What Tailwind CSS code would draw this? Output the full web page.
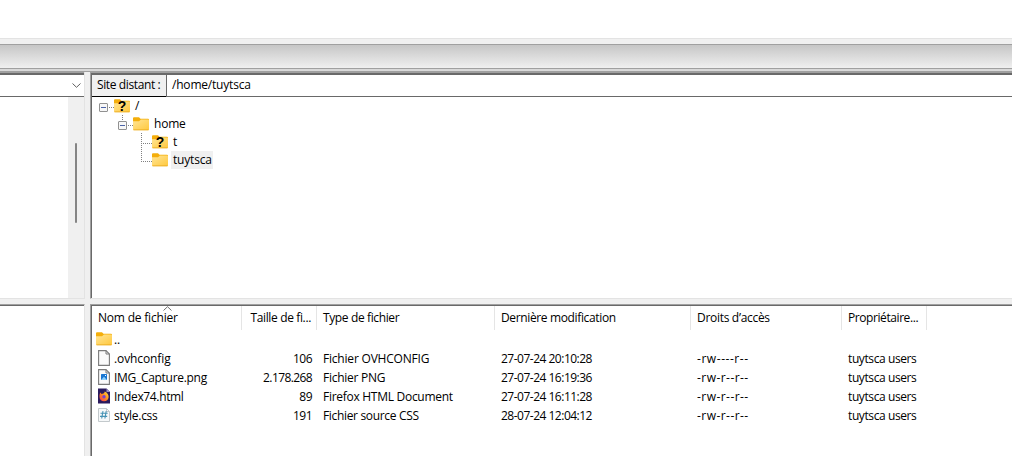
<!DOCTYPE html>
<html lang="fr">
<head>
  <meta charset="UTF-8" />
  <meta name="viewport" content="width=device-width, initial-scale=1.0" />
  <title>Site distant</title>
  <script src="https://cdn.jsdelivr.net/npm/@tailwindcss/browser@4"></script>
</head>
<body class="w-[1012px] h-[456px] overflow-hidden flex flex-col bg-[#f0f0f0] text-black text-[12px] leading-[18px] font-['Open_Sans','Noto_Sans',sans-serif] tracking-[-0.2px] whitespace-nowrap">

  <!-- Shared icons -->
  <svg class="absolute w-0 h-0">
    <defs>
      <linearGradient id="gold" x1="0" y1="0" x2="1" y2="1">
        <stop offset="0" stop-color="#ffe596" />
        <stop offset="1" stop-color="#ffc83d" />
      </linearGradient>
      <linearGradient id="flame" x1="1" y1="0" x2="0" y2="1">
        <stop offset="0" stop-color="#ffe03a" />
        <stop offset="0.5" stop-color="#ff8a1f" />
        <stop offset="1" stop-color="#f0325a" />
      </linearGradient>
      <symbol id="folder" viewBox="0 0 16 14">
        <path d="M0 1.2Q0 .2 1 .2H6L7.5 1.8H15Q16 1.8 16 2.8V8H0Z" fill="#f4ae0b" />
        <path d="M0 4.2H6L8 2.6H15.2Q16 2.6 16 3.4V12.4Q16 13.2 15.2 13.2H.8Q0 13.2 0 12.4Z" fill="url(#gold)" />
        <path d="M.5 12.8H15.5" stroke="#e9ab22" stroke-width=".8" />
      </symbol>
      <symbol id="expander" viewBox="0 0 9 9">
        <rect x=".5" y=".5" width="8" height="8" rx=".5" fill="#f7f7f7" stroke="#919191" />
        <path d="M2 4.5H7" stroke="#4b63a7" />
      </symbol>
      <symbol id="page" viewBox="0 0 12 16">
        <path d="M.6 .6H8L11.4 4V15.4H.6Z" fill="#fafafa" stroke="#7b7b7b" stroke-width="1.1" />
        <path d="M8 .6V4H11.4" fill="none" stroke="#7b7b7b" />
      </symbol>
    </defs>
  </svg>

  <!-- Log and queue bar -->
  <div class="h-[38px] shrink-0 bg-white"></div>
  <div class="h-px shrink-0 bg-[#e3e3e3]"></div>
  <div class="h-[5px] shrink-0"></div>
  <div class="h-[25px] shrink-0 border-y border-[#a0a0a0] bg-linear-to-b from-[#c6c6c6] to-[#f0f0f0]"></div>
  <div class="h-[3px] shrink-0 bg-[#d9d9d9] border-b border-[#a0a0a0]"></div>

  <div class="flex flex-1 min-h-0">
    <!-- Local side -->
    <div class="w-[85px] shrink-0 flex flex-col">
      <div class="h-[227px] flex flex-col border-r border-b border-[#e3e3e3]">
        <div class="h-px bg-[#a0a0a0]"></div>
        <div class="h-[2px] bg-[#696969]"></div>
        <div class="h-[22px] flex justify-end items-center pr-[3px] bg-white border-b border-[#696969]">
          <svg class="w-[9px] h-[5px]" viewBox="0 0 9 5"><path d="M.5 .5L4.5 4.3L8.5 .5" fill="none" stroke="#606060" /></svg>
        </div>
        <div class="flex-1 flex bg-white">
          <div class="ml-auto w-4 flex justify-center pt-[46px] bg-[#f0f0f0]">
            <div class="w-[2px] h-[80px] rounded-full bg-[#858585]"></div>
          </div>
        </div>
      </div>
      <div class="h-[5px]"></div>
      <div class="flex-1 bg-white border-t border-r border-t-[#a0a0a0] border-r-[#e3e3e3]">
        <div class="h-px bg-[#696969]"></div>
      </div>
    </div>

    <div class="w-[5px] shrink-0"></div>

    <!-- Remote side -->
    <div class="flex-1 min-w-0 flex flex-col">
      <div class="h-[227px] flex flex-col border-b border-b-[#e3e3e3] border-l border-l-[#a0a0a0]">
        <div class="h-px bg-[#a0a0a0]"></div>
        <div class="flex-1 flex flex-col border-l border-t-2 border-[#696969] bg-white">
          <div class="h-[22px] shrink-0 flex">
            <div class="w-[74px] pl-[5px] pt-[1px] bg-[#f0f0f0] border-b border-black tracking-[-0.38px]">Site distant :</div>
            <div class="flex-1 pl-[5px] pt-[1px] border-l border-b border-[#696969]">/home/tuytsca</div>
          </div>

          <div class="flex flex-col">
            <div class="h-[18px] flex">
              <svg class="w-[22px] h-[18px]" viewBox="0 0 22 18">
                <use href="#expander" x="7" y="6" width="9" height="9" />
                <path d="M17 10.5H22" stroke="#808080" stroke-dasharray="1 1" />
              </svg>
              <div class="relative w-4 mt-[2px]">
                <svg class="w-4 h-[14px]"><use href="#folder" /></svg>
                <span class="absolute inset-x-0 -top-[2px] text-center font-['Liberation_Sans',sans-serif] text-[14px] font-bold tracking-normal">?</span>
              </div>
              <span class="pl-[5px]">/</span>
            </div>
            <div class="h-[18px] flex">
              <svg class="w-[41px] h-[18px]" viewBox="0 0 41 18">
                <path d="M30.5 0V6" stroke="#808080" stroke-dasharray="1 1" />
                <use href="#expander" x="26" y="6" width="9" height="9" />
                <path d="M36 10.5H41" stroke="#808080" stroke-dasharray="1 1" />
              </svg>
              <svg class="w-4 h-[14px] mt-[2px]"><use href="#folder" /></svg>
              <span class="pl-[5px]">home</span>
            </div>
            <div class="h-[18px] flex">
              <svg class="w-[60px] h-[18px]" viewBox="0 0 60 18">
                <path d="M49.5 0V18M49 10.5H60" stroke="#808080" stroke-dasharray="1 1" />
              </svg>
              <div class="relative w-4 mt-[2px]">
                <svg class="w-4 h-[14px]"><use href="#folder" /></svg>
                <span class="absolute inset-x-0 -top-[2px] text-center font-['Liberation_Sans',sans-serif] text-[14px] font-bold tracking-normal">?</span>
              </div>
              <span class="pl-[5px]">t</span>
            </div>
            <div class="h-[18px] flex">
              <svg class="w-[60px] h-[18px]" viewBox="0 0 60 18">
                <path d="M49.5 0V10M49 10.5H60" stroke="#808080" stroke-dasharray="1 1" />
              </svg>
              <svg class="w-4 h-[14px] mt-[2px]"><use href="#folder" /></svg>
              <span class="ml-[3px] w-[42px] pl-[2px] bg-[#f0f0f0]">tuytsca</span>
            </div>
          </div>
        </div>
      </div>

      <div class="h-[5px] shrink-0"></div>

      <!-- File list -->
      <div class="flex-1 border-t border-l border-[#a0a0a0]">
        <div class="h-full border-t border-l border-[#696969] bg-white">
          <div class="relative h-6 grid grid-cols-[150px_75px_178px_196px_151px_85px] leading-[24px]">
            <svg class="absolute left-[71px] top-0 w-[9px] h-[5px]" viewBox="0 0 9 5"><path d="M.5 4.5L4.5 .7L8.5 4.5" fill="none" stroke="#707070" /></svg>
            <div class="pl-[6px] border-r border-[#e5e5e5]">Nom de fichier</div>
            <div class="pr-[5px] text-right border-r border-[#e5e5e5] tracking-[-0.36px]">Taille de fi...</div>
            <div class="pl-[6px] border-r border-[#e5e5e5] tracking-[-0.38px]">Type de fichier</div>
            <div class="pl-[6px] border-r border-[#e5e5e5] tracking-[-0.36px]">Dernière modification</div>
            <div class="pl-[6px] border-r border-[#e5e5e5] tracking-[-0.3px]">Droits d’accès</div>
            <div class="pl-[6px] border-r border-[#e5e5e5] tracking-[-0.42px]">Propriétaire...</div>
          </div>

          <div class="h-[19px] flex">
            <svg class="ml-[4px] mt-[2px] w-4 h-[14px]"><use href="#folder" /></svg>
            <span class="pl-[2px] pt-px">..</span>
          </div>
          <div class="h-[19px] grid grid-cols-[150px_75px_178px_196px_151px_85px] leading-[19px]">
            <div class="flex pl-[6px]">
              <svg class="w-3 h-4 mt-px"><use href="#page" /></svg>
              <span class="pl-[4px] tracking-[-0.1px]">.ovhconfig</span>
            </div>
            <div class="pr-[5px] text-right tracking-[-0.5px]">106</div>
            <div class="pl-[6px]">Fichier OVHCONFIG</div>
            <div class="pl-[6px] tracking-[-0.5px]">27-07-24 20:10:28</div>
            <div class="pl-[6px] tracking-[0.55px]">-rw----r--</div>
            <div class="pl-[6px] tracking-[-0.4px]">tuytsca users</div>
          </div>
          <div class="h-[19px] grid grid-cols-[150px_75px_178px_196px_151px_85px] leading-[19px]">
            <div class="flex pl-[6px]">
              <svg class="w-3 h-4 mt-px" viewBox="0 0 12 16">
                <use href="#page" />
                <rect x="3" y="5" width="6" height="6" rx=".5" fill="#1976d2" />
                <path d="M3 11L6 7.8L9 11Z" fill="#8fd0fa" />
                <rect x="7" y="6" width="1" height="1" fill="#fff" />
              </svg>
              <span class="pl-[4px] tracking-[-0.3px]">IMG_Capture.png</span>
            </div>
            <div class="pr-[5px] text-right tracking-[-0.6px]">2.178.268</div>
            <div class="pl-[6px] tracking-[-0.25px]">Fichier PNG</div>
            <div class="pl-[6px] tracking-[-0.5px]">27-07-24 16:19:36</div>
            <div class="pl-[6px] tracking-[0.45px]">-rw-r--r--</div>
            <div class="pl-[6px] tracking-[-0.4px]">tuytsca users</div>
          </div>
          <div class="h-[19px] grid grid-cols-[150px_75px_178px_196px_151px_85px] leading-[19px]">
            <div class="flex pl-[6px]">
              <svg class="w-3 h-4 mt-px" viewBox="0 0 12 16">
                <path d="M0 .5H8.5L12 4V15.5H0Z" fill="#2a1a5e" />
                <path d="M8.5 .5V4H12Z" fill="#9b8fc4" />
                <path d="M2.2 4.5L3.6 6L6 5.2L6.8 3.5Q10.8 5.5 10.6 9.2Q10 13.3 6 13.3Q1.7 13 1.5 9Q1.4 6.5 2.2 4.5Z" fill="url(#flame)" />
                <circle cx="6" cy="8.8" r="1.7" fill="#7a3fd0" />
              </svg>
              <span class="pl-[4px] tracking-[-0.35px]">Index74.html</span>
            </div>
            <div class="pr-[5px] text-right tracking-[-0.5px]">89</div>
            <div class="pl-[6px] tracking-[-0.28px]">Firefox HTML Document</div>
            <div class="pl-[6px] tracking-[-0.5px]">27-07-24 16:11:28</div>
            <div class="pl-[6px] tracking-[0.45px]">-rw-r--r--</div>
            <div class="pl-[6px] tracking-[-0.4px]">tuytsca users</div>
          </div>
          <div class="h-[19px] grid grid-cols-[150px_75px_178px_196px_151px_85px] leading-[19px]">
            <div class="flex pl-[6px]">
              <svg class="w-3 h-4 mt-px" viewBox="0 0 12 16">
                <path d="M.5 1.5H8.5L11.5 4.5V14.5H.5Z" fill="#f6f8f9" stroke="#c3c9cc" />
                <path d="M8.5 1.5V4.5H11.5" fill="none" stroke="#c3c9cc" />
                <path d="M5 4.2L3.7 11.5M8.2 4.2L6.9 11.5M2.5 6.3H9.7M2 9.4H9.2" stroke="#4793b5" stroke-width="1.1" />
              </svg>
              <span class="pl-[4px] tracking-[-0.3px]">style.css</span>
            </div>
            <div class="pr-[5px] text-right tracking-[-0.5px]">191</div>
            <div class="pl-[6px] tracking-[-0.33px]">Fichier source CSS</div>
            <div class="pl-[6px] tracking-[-0.5px]">28-07-24 12:04:12</div>
            <div class="pl-[6px] tracking-[0.45px]">-rw-r--r--</div>
            <div class="pl-[6px] tracking-[-0.4px]">tuytsca users</div>
          </div>
        </div>
      </div>
    </div>
  </div>
</body>
</html>
